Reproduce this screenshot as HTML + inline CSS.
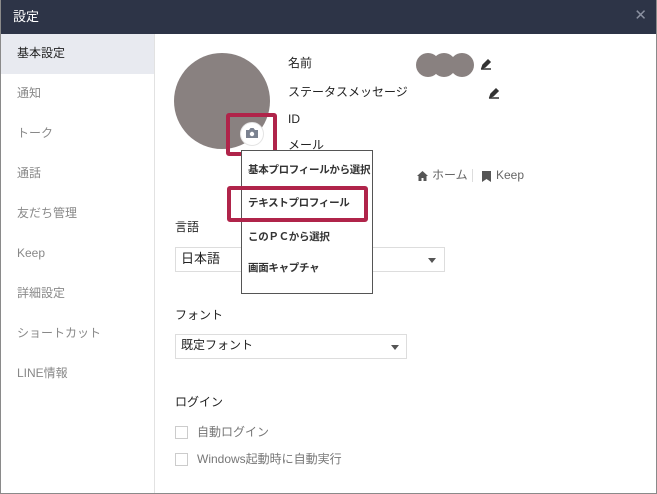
<!DOCTYPE html><html><head><meta charset="utf-8"><style>
*{margin:0;padding:0;box-sizing:border-box}
body{width:657px;height:494px;position:relative;overflow:hidden;background:#fff;font-family:"Liberation Sans","Noto Sans CJK JP",sans-serif;font-size:12px;color:#222}
.a{position:absolute;white-space:nowrap;line-height:1.2}
.frame{left:0;top:0;width:657px;height:494px;border:1px solid #8a8a8a;border-top:none}
.hdr{left:0;top:0;width:657px;height:34px;background:#2d3447;color:#fff;font-size:13px;padding:9px 0 0 13px}
.side{left:1px;top:34px;width:154px;height:459px;border-right:1px solid #e2e2e2;background:#fff}
.si{position:absolute;left:17px;color:#888;font-size:12px}
.sel{left:1px;top:34px;width:153px;height:40px;background:#e8eaf0}
.box{border:1px solid #ddd;background:#fff}
.tri{width:0;height:0;border-left:4px solid transparent;border-right:4px solid transparent;border-top:5px solid #555}
.red{border:4px solid #b0244a;border-radius:3px}
.cb{width:13px;height:13px;border:1px solid #ccc}
.mi{position:absolute;left:7px;font-size:10.5px;font-weight:bold;color:#333;white-space:nowrap;letter-spacing:-0.3px}
</style></head><body>
<div class="a hdr">設定</div>
<div class="a" style="right:10px;top:7px;color:#8a90a0;font-size:15px">✕</div>
<div class="a side"></div>
<div class="a sel"></div>
<div class="a si" style="top:46px;color:#222">基本設定</div>
<div class="a si" style="top:86px">通知</div>
<div class="a si" style="top:126px">トーク</div>
<div class="a si" style="top:166px">通話</div>
<div class="a si" style="top:206px">友だち管理</div>
<div class="a si" style="top:246px">Keep</div>
<div class="a si" style="top:286px">詳細設定</div>
<div class="a si" style="top:326px">ショートカット</div>
<div class="a si" style="top:366px">LINE情報</div>
<div class="a frame"></div>

<div class="a" style="left:174px;top:53px;width:96px;height:96px;border-radius:50%;background:#898180"></div>
<div class="a" style="left:240px;top:122px;width:24px;height:24px;border-radius:50%;background:#fff;border:1px solid #e4e4e4"></div>
<svg class="a" style="left:245px;top:127px" width="14" height="12" viewBox="0 0 14 12"><path d="M1 3h3l1.5-2h3L10 3h3v8H1z" fill="#7b8290"/><circle cx="7" cy="7" r="2.2" fill="#fff"/></svg>
<div class="a red" style="left:226px;top:113px;width:51px;height:43px"></div>

<div class="a" style="left:288px;top:56px">名前</div>
<div class="a" style="left:288px;top:85px">ステータスメッセージ</div>
<div class="a" style="left:288px;top:112px">ID</div>
<div class="a" style="left:288px;top:138px">メール</div>
<div class="a" style="left:416px;top:53px;width:24px;height:24px;border-radius:50%;background:#898180"></div>
<div class="a" style="left:432px;top:53px;width:24px;height:24px;border-radius:50%;background:#898180"></div>
<div class="a" style="left:450px;top:53px;width:24px;height:24px;border-radius:50%;background:#898180"></div>
<svg class="a" style="left:480px;top:58px" width="12" height="12" viewBox="0 0 12 12"><path d="M2 10l1-3 5-5 2 2-5 5z M1 11h10" stroke="#333" stroke-width="1.5" fill="#333"/></svg>
<svg class="a" style="left:488px;top:87px" width="12" height="12" viewBox="0 0 12 12"><path d="M2 10l1-3 5-5 2 2-5 5z M1 11h10" stroke="#333" stroke-width="1.5" fill="#333"/></svg>

<svg class="a" style="left:417px;top:171px" width="11" height="10" viewBox="0 0 11 10"><path d="M5.5 0L0 5h1.5v5h3V7h2v3h3V5H11z" fill="#555"/></svg>
<div class="a" style="left:432px;top:168px;color:#666">ホーム</div>
<div class="a" style="left:472px;top:169px;width:1px;height:13px;background:#ddd"></div>
<svg class="a" style="left:482px;top:171px" width="9" height="11" viewBox="0 0 9 11"><path d="M0 0h9v11L4.5 8 0 11z" fill="#555"/></svg>
<div class="a" style="left:496px;top:168px;color:#666">Keep</div>

<div class="a" style="left:175px;top:220px">言語</div>
<div class="a box" style="left:175px;top:247px;width:270px;height:25px"></div>
<div class="a" style="left:181px;top:251px;font-size:13px">日本語</div>
<div class="a tri" style="left:428px;top:258px"></div>

<div class="a" style="left:175px;top:308px">フォント</div>
<div class="a box" style="left:175px;top:334px;width:232px;height:25px"></div>
<div class="a" style="left:181px;top:338px">既定フォント</div>
<div class="a tri" style="left:391px;top:345px"></div>

<div class="a" style="left:175px;top:395px">ログイン</div>
<div class="a cb" style="left:175px;top:426px"></div>
<div class="a" style="left:197px;top:425px;color:#777">自動ログイン</div>
<div class="a cb" style="left:175px;top:453px"></div>
<div class="a" style="left:197px;top:452px;color:#777">Windows起動時に自動実行</div>

<div class="a" style="left:241px;top:150px;width:132px;height:144px;background:#fff;border:1px solid #555"></div>
<div class="a" style="left:241px;top:150px;width:132px;height:144px">
<div class="mi" style="top:14px">基本プロフィールから選択</div>
<div class="mi" style="top:47px">テキストプロフィール</div>
<div class="mi" style="top:81px">このＰＣから選択</div>
<div class="mi" style="top:112px">画面キャプチャ</div>
</div>
<div class="a red" style="left:227px;top:186px;width:141px;height:36px"></div>
</body></html>
